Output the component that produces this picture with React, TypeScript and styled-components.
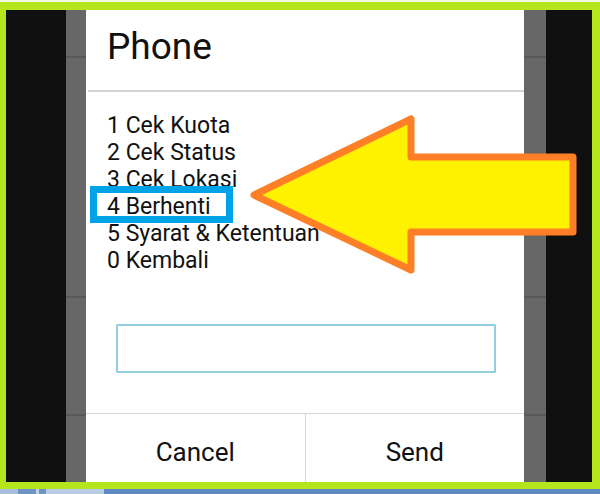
import styled, { createGlobalStyle } from 'styled-components';

const GlobalStyle = createGlobalStyle`
  html, body {
    margin: 0;
    padding: 0;
    background: #ffffff;
  }
  * {
    box-sizing: border-box;
  }
`;

const Page = styled.div`
  position: relative;
  width: 600px;
  height: 494px;
  overflow: hidden;
  display: flex;
  flex-direction: column;
  font-family: Roboto, 'Noto Sans', 'Liberation Sans', sans-serif;
  color: #111111;
`;

const TopEdge = styled.div`
  height: 2px;
  flex-shrink: 0;
  background: #f4f9e4;
`;

const Frame = styled.div`
  height: 487px;
  flex-shrink: 0;
  background: #b5e61d;
  padding: 8px 8px 7px 6px;
`;

const Screen = styled.div`
  display: flex;
  height: 472px;
  overflow: hidden;
`;

const SideBlack = styled.div<{ $width: number }>`
  width: ${(p) => p.$width}px;
  flex-shrink: 0;
  background: #101010;
`;

const SideGray = styled.div<{ $width: number }>`
  width: ${(p) => p.$width}px;
  flex-shrink: 0;
  display: flex;
  flex-direction: column;
  background: #676767;
`;

const Tile = styled.div<{ $height: number }>`
  height: ${(p) => p.$height}px;
  flex-shrink: 0;
  border-bottom: 2px solid #585858;
`;

const Dialog = styled.div`
  width: 438px;
  flex-shrink: 0;
  display: flex;
  flex-direction: column;
  background: #ffffff;
  & > * {
    flex-shrink: 0;
  }
`;

const Title = styled.div`
  height: 80px;
  padding: 15px 0 0 21px;
  font-size: 37px;
  line-height: 43px;
  font-weight: 400;
`;

const TitleDivider = styled.div`
  height: 2px;
  margin-left: 2px;
  background: #d3d3d3;
`;

const Body = styled.div`
  padding: 20px 28px 0 21px;
`;

const MenuLine = styled.div`
  font-size: 23px;
  line-height: 27px;
  white-space: nowrap;
`;

const Field = styled.div`
  height: 49px;
  margin: 50px 0 40px 9px;
  border: 2px solid #93cfdf;
  border-radius: 1px;
  background: #ffffff;
`;

const ButtonRow = styled.div`
  display: flex;
  height: 77px;
  border-top: 1px solid #d6d6d6;
`;

const DialogButton = styled.div<{ $first?: boolean }>`
  flex: 1;
  display: flex;
  align-items: center;
  justify-content: center;
  font-size: 26px;
  border-right: ${(p) => (p.$first ? '1px solid #d6d6d6' : 'none')};
`;

const Taskbar = styled.div`
  height: 5px;
  flex-shrink: 0;
  background: linear-gradient(
    to right,
    #a7bfdc 0 18px,
    #6f93c4 18px 36px,
    #c2d3e8 36px 39px,
    #6f93c4 39px 46px,
    #b8cce6 46px 104px,
    #5d89c2 104px
  );
`;

const Highlight = styled.div`
  position: absolute;
  left: 90px;
  top: 186px;
  width: 143px;
  height: 37px;
  border: 7px solid #00a2e8;
`;

const ArrowLayer = styled.svg`
  position: absolute;
  left: 0;
  top: 0;
  pointer-events: none;
`;

const menu = ['1 Cek Kuota', '2 Cek Status', '3 Cek Lokasi', '4 Berhenti', '5 Syarat & Ketentuan', '0 Kembali'];

const App = () => {
  return (
    <Page>
      <GlobalStyle />
      <TopEdge />
      <Frame>
        <Screen>
          <SideBlack $width={60} />
          <SideGray $width={20}>
            <Tile $height={48} />
            <Tile $height={240} />
            <Tile $height={118} />
          </SideGray>
          <Dialog>
            <Title>Phone</Title>
            <TitleDivider />
            <Body>
              {menu.map((item) => (
                <MenuLine key={item}>{item}</MenuLine>
              ))}
              <Field />
            </Body>
            <ButtonRow>
              <DialogButton $first>Cancel</DialogButton>
              <DialogButton>Send</DialogButton>
            </ButtonRow>
          </Dialog>
          <SideGray $width={22}>
            <Tile $height={48} />
            <Tile $height={240} />
            <Tile $height={118} />
          </SideGray>
          <SideBlack $width={46} />
        </Screen>
      </Frame>
      <Taskbar />
      <Highlight />
      <ArrowLayer width={600} height={494} viewBox="0 0 600 494">
        <polygon
          points="254,195 411,119 411,157 573,157 573,232 411,232 411,270"
          fill="#fff200"
          stroke="#ff7f27"
          strokeWidth={7}
          strokeLinejoin="round"
        />
      </ArrowLayer>
    </Page>
  );
};

export default App;
